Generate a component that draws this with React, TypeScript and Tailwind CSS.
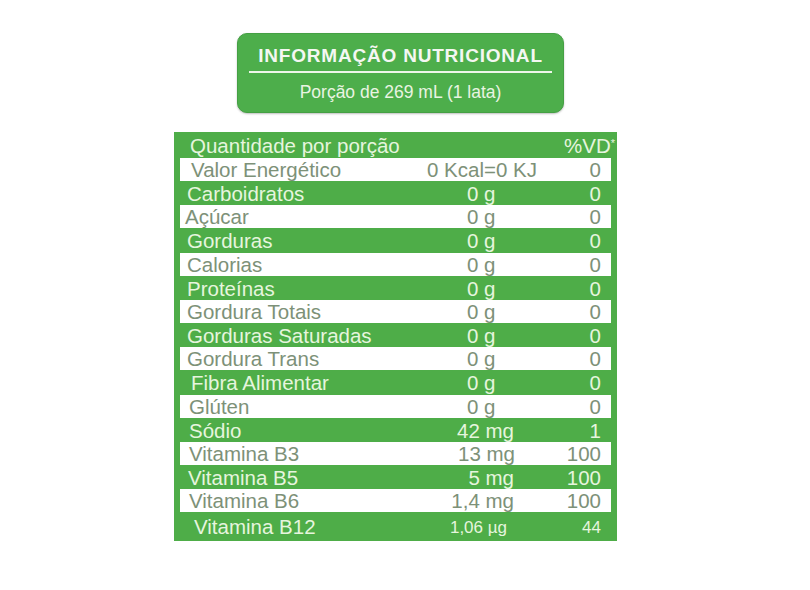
type Row = {
  label: string;
  value: string;
  vd: string;
  white: boolean;
  h: string;
  labelPad: string;
  valueCls: string;
  vdCls?: string;
};

const ROWS: Row[] = [
  { label: "Valor Energético", value: "0 Kcal=0 KJ", vd: "0", white: true, h: "h-[23px]", labelPad: "pl-[11px]", valueCls: "pl-[7px]" },
  { label: "Carboidratos", value: "0 g", vd: "0", white: false, h: "h-[24px]", labelPad: "pl-[7px]", valueCls: "pl-[47px]" },
  { label: "Açúcar", value: "0 g", vd: "0", white: true, h: "h-[23px]", labelPad: "pl-[5px]", valueCls: "pl-[47px]" },
  { label: "Gorduras", value: "0 g", vd: "0", white: false, h: "h-[25px]", labelPad: "pl-[7px]", valueCls: "pl-[47px]" },
  { label: "Calorias", value: "0 g", vd: "0", white: true, h: "h-[23px]", labelPad: "pl-[7px]", valueCls: "pl-[47px]" },
  { label: "Proteínas", value: "0 g", vd: "0", white: false, h: "h-[24px]", labelPad: "pl-[7px]", valueCls: "pl-[47px]" },
  { label: "Gordura Totais", value: "0 g", vd: "0", white: true, h: "h-[23px]", labelPad: "pl-[7px]", valueCls: "pl-[47px]" },
  { label: "Gorduras Saturadas", value: "0 g", vd: "0", white: false, h: "h-[24px]", labelPad: "pl-[7px]", valueCls: "pl-[47px]" },
  { label: "Gordura Trans", value: "0 g", vd: "0", white: true, h: "h-[23px]", labelPad: "pl-[7px]", valueCls: "pl-[47px]" },
  { label: "Fibra Alimentar", value: "0 g", vd: "0", white: false, h: "h-[25px]", labelPad: "pl-[11px]", valueCls: "pl-[47px]" },
  { label: "Glúten", value: "0 g", vd: "0", white: true, h: "h-[23px]", labelPad: "pl-[9px]", valueCls: "pl-[47px]" },
  { label: "Sódio", value: "42 mg", vd: "1", white: false, h: "h-[24px]", labelPad: "pl-[9px]", valueCls: "text-right pr-[31px]" },
  { label: "Vitamina B3", value: "13 mg", vd: "100", white: true, h: "h-[23px]", labelPad: "pl-[9px]", valueCls: "text-right pr-[30px]" },
  { label: "Vitamina B5", value: "5 mg", vd: "100", white: false, h: "h-[24px]", labelPad: "pl-[8px]", valueCls: "text-right pr-[31px]" },
  { label: "Vitamina B6", value: "1,4 mg", vd: "100", white: true, h: "h-[23px]", labelPad: "pl-[9px]", valueCls: "text-right pr-[31px]" },
  {
    label: "Vitamina B12",
    value: "1,06 µg",
    vd: "44",
    white: false,
    h: "h-[29px]",
    labelPad: "pl-[14px]",
    valueCls: "text-right pr-[38px] text-[17px]",
    vdCls: "text-[17px]",
  },
];

function NutritionRow({ row }: { row: Row }) {
  const color = row.white ? "bg-white text-[#7d9178]" : "text-[#e6f5de]";
  return (
    <div className={`mx-[6px] flex items-center pt-[2px] leading-none ${row.h} ${color}`}>
      <span className={`w-[240px] whitespace-nowrap ${row.labelPad}`}>{row.label}</span>
      <span className={`w-[125px] whitespace-nowrap ${row.valueCls}`}>{row.value}</span>
      <span className={`flex-1 pr-[10px] text-right ${row.vdCls ?? ""}`}>{row.vd}</span>
    </div>
  );
}

export default function App() {
  return (
    <div className="min-h-[590px] w-[810px] bg-white font-['Liberation_Sans',Arial,sans-serif]">
      <div className="flex flex-col pt-[33px]">
        <div className="ml-[237px] flex h-[80px] w-[327px] flex-col items-center rounded-[10px] border border-[#45a044] bg-[#4dae4b] shadow-[0_1px_2px_rgba(0,0,0,0.25)]">
          <div className="mt-[12px] w-[303px] border-b-2 border-[#eef6ea] pb-[5px] text-center text-[19px] font-bold leading-[20px] tracking-[0.8px] text-[#f4f7f2]">
            INFORMAÇÃO NUTRICIONAL
          </div>
          <div className="mt-[10px] text-[17.5px] leading-[18px] text-[#e9f4e2]">
            Porção de 269 mL (1 lata)
          </div>
        </div>

        <div className="ml-[174px] mt-[19px] w-[443px] bg-[#4ead48] text-[20.5px]">
          <div className="mx-[6px] flex h-[26px] items-center pt-[2px] leading-none text-[#e6f5de]">
            <span className="flex-1 whitespace-nowrap pl-[10px]">Quantidade por porção</span>
            <span className="mr-[-4px] whitespace-nowrap">
              %VD<sup className="text-[11px]">*</sup>
            </span>
          </div>
          {ROWS.map((row) => (
            <NutritionRow key={row.label} row={row} />
          ))}
        </div>
      </div>
    </div>
  );
}
